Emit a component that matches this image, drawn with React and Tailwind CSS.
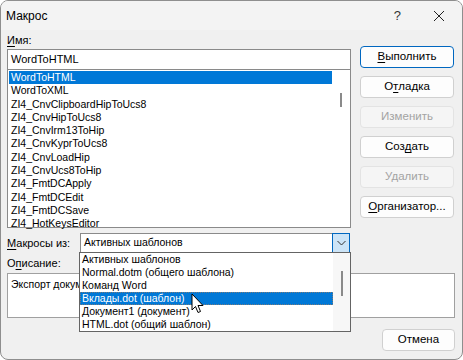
import React from 'react';

const macros = [
  'WordToHTML',
  'WordToXML',
  'ZI4_CnvClipboardHipToUcs8',
  'ZI4_CnvHipToUcs8',
  'ZI4_CnvIrm13ToHip',
  'ZI4_CnvKyprToUcs8',
  'ZI4_CnvLoadHip',
  'ZI4_CnvUcs8ToHip',
  'ZI4_FmtDCApply',
  'ZI4_FmtDCEdit',
  'ZI4_FmtDCSave',
  'ZI4_HotKeysEditor',
];

const sources = [
  'Активных шаблонов',
  'Normal.dotm (общего шаблона)',
  'Команд Word',
  'Вклады.dot (шаблон)',
  'Документ1 (документ)',
  'HTML.dot (общий шаблон)',
];

function Btn({ children, primary, disabled }) {
  let cls = 'h-[22px] w-full rounded-[4px] border text-[11.5px] flex items-center justify-center ';
  if (primary) cls += 'border-[#0067c0] bg-[#fdfdfd] text-black';
  else if (disabled) cls += 'border-[#e3e3e3] bg-[#f5f5f5] text-[#a3a3a3]';
  else cls += 'border-[#d0d0d0] bg-[#fdfdfd] text-black';
  return <div className={cls}>{children}</div>;
}

function U({ children }) {
  return <span className="underline underline-offset-2">{children}</span>;
}

export default function App() {
  return (
    <div className="w-[463px] h-[360px] bg-white">
      <div className="relative w-[463px] h-[360px] rounded-[8px] border border-[#8e8e8e] bg-[#f0f0f0] overflow-hidden font-['Liberation_Sans',Arial,sans-serif] text-black">
        {/* title bar */}
        <div className="h-[29px] flex items-center bg-[#f3f3f3]">
          <span className="ml-[5px] text-[12px]">Макрос</span>
          <span className="ml-auto text-[13px] text-[#333] mr-[32px]">?</span>
          <svg width="12" height="12" viewBox="0 0 12 12" className="mr-[17px]">
            <path d="M1 1 L11 11 M11 1 L1 11" stroke="#222" strokeWidth="1" />
          </svg>
        </div>

        <div className="flex pl-[6px]">
          <div className="w-[344px]">
            <div className="mt-[3px] h-[14px] leading-[14px] text-[11px]">
              <U>И</U>мя:
            </div>
            <div className="mt-[2px] h-[21px] border border-[#8a8a8a] bg-white flex items-center pl-[3px] text-[11px] font-['Liberation_Sans',Arial,sans-serif]">
              WordToHTML
            </div>
            <div className="h-[158px] border-x border-b border-[#8a8a8a] bg-white flex text-[10.5px]">
              <div className="w-[324px] pt-[1px] pl-[1px]">
                {macros.map((m, i) => (
                  <div
                    key={m}
                    className={
                      'h-[13.3px] leading-[13.3px] pl-[2px] ' +
                      (i === 0 ? 'bg-[#0078d7] text-white' : '')
                    }
                  >
                    {m}
                  </div>
                ))}
              </div>
              <div className="flex-1 flex justify-center pt-[23px]">
                <div className="w-[2px] h-[14px] bg-[#8a8a8a]" />
              </div>
            </div>
          </div>

          <div className="ml-[9px] w-[94px] mt-[16px] flex flex-col gap-[8px]">
            <Btn primary>
              <U>В</U>ыполнить
            </Btn>
            <Btn>
              О<U>т</U>ладка
            </Btn>
            <Btn disabled>Изменить</Btn>
            <Btn>
              Соз<U>д</U>ать
            </Btn>
            <Btn disabled>Удалить</Btn>
            <Btn>
              <U>О</U>рганизатор...
            </Btn>
          </div>
        </div>

        {/* macros from */}
        <div className="mt-[5px] pl-[6px] h-[20px] flex items-center">
          <div className="w-[73px] text-[11px]">
            <U>М</U>акросы из:
          </div>
          <div className="w-[270px] h-[20px] border border-[#8a8a8a] bg-white flex items-center text-[10.5px]">
            <span className="pl-[3px] flex-1">Активных шаблонов</span>
            <div className="w-[18px] h-[20px] -mr-px border border-[#0067c0] bg-[#cce4f7] flex items-center justify-center">
              <svg width="9" height="6" viewBox="0 0 9 6">
                <path d="M0.5 1 L4.5 5 L8.5 1" stroke="#333" strokeWidth="1" fill="none" />
              </svg>
            </div>
          </div>
        </div>

        <div className="mt-[3px] pl-[6px] h-[14px] leading-[14px] text-[11px]">
          О<U>п</U>исание:
        </div>
        <div className="mt-[3px] ml-[6px] w-[448px] h-[45px] border border-[#a0a0a0] bg-white pl-[3px] pt-[3px] text-[10.5px]">
          Экспорт документа в HTML
        </div>

        <div className="mt-[11px] flex justify-end pr-[7px]">
          <div className="w-[73px]">
            <Btn>Отмена</Btn>
          </div>
        </div>

        {/* open dropdown list */}
        <div className="absolute left-[78px] top-[251px] w-[272px] h-[80px] border border-[#646464] bg-white flex text-[10.5px]">
          <div className="w-[253px]">
            {sources.map((s, i) => (
              <div
                key={s}
                className={
                  'h-[13px] leading-[13px] pl-[2px] whitespace-nowrap ' +
                  (i === 3 ? 'bg-[#0078d7] text-white outline-1 outline-dotted outline-offset-[-1px] outline-[#7a7a7a]' : '')
                }
              >
                {s}
              </div>
            ))}
          </div>
          <div className="flex-1 bg-[#f7f7f7] flex justify-center pt-[18px]">
            <div className="w-[2px] h-[25px] bg-[#8a8a8a]" />
          </div>
        </div>

        {/* mouse cursor */}
        <svg className="absolute left-[190px] top-[292px]" width="14" height="22" viewBox="0 0 14 22">
          <path
            d="M1 1 L1 17 L4.5 13.5 L7 19.5 L9.5 18.5 L7 12.5 L12 12.5 Z"
            fill="white"
            stroke="black"
            strokeWidth="1"
            strokeLinejoin="round"
          />
        </svg>
      </div>
    </div>
  );
}
